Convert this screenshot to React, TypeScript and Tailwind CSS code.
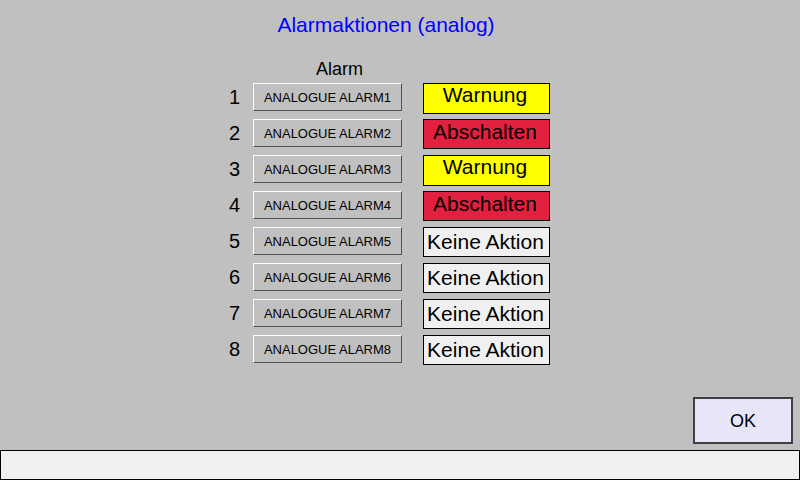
const font = { fontFamily: '"Liberation Sans", Arial, sans-serif' };

type Action = 'warn' | 'off' | 'none';

const rows: { n: number; action: Action }[] = [
  { n: 1, action: 'warn' },
  { n: 2, action: 'off' },
  { n: 3, action: 'warn' },
  { n: 4, action: 'off' },
  { n: 5, action: 'none' },
  { n: 6, action: 'none' },
  { n: 7, action: 'none' },
  { n: 8, action: 'none' },
];

const ActionBox = ({ action }: { action: Action }) => {
  if (action === 'warn')
    return (
      <div className="w-[127px] h-[31px] border border-black bg-[#ffff00] flex justify-center pt-0 pr-[3px] text-[21px] leading-[21px] text-black">
        Warnung
      </div>
    );
  if (action === 'off')
    return (
      <div className="w-[127px] h-[30px] border border-black bg-[#e2203f] flex justify-center pt-px pr-[3px] text-[21px] leading-[21px] text-black">
        Abschalten
      </div>
    );
  return (
    <div className="w-[127px] h-[30px] border border-black bg-[#f0f0f0] flex justify-center pt-[3px] pr-[2px] text-[21px] leading-[21px] text-black whitespace-nowrap">
      Keine Aktion
    </div>
  );
};

export default function App() {
  return (
    <div className="w-[800px] h-[480px] bg-[#c0c0c0] flex flex-col overflow-hidden" style={font}>
      <div className="pt-[14px] pr-[28px] text-center text-[21px] leading-[21px] text-[#0000ff]">
        Alarmaktionen (analog)
      </div>

      <div className="ml-[222px] flex flex-col">
        <div className="mt-[25px] ml-[94px] text-[18px] leading-[18px] text-black">Alarm</div>
        <div className="mt-[5px] flex flex-col gap-[5px]">
          {rows.map((r) => (
            <div key={r.n} className="flex items-start h-[31px]">
              <div className="w-[25px] h-[28px] flex items-center justify-center text-[20px] leading-[20px] text-black">
                {r.n}
              </div>
              <button className="ml-[6px] w-[149px] h-[28px] bg-[#c0c0c0] border border-t-white border-l-white border-b-[#505050] border-r-[#505050] flex items-center justify-center text-[13px] leading-[13px] text-black">
                ANALOGUE ALARM{r.n}
              </button>
              <div className="ml-[21px]">
                <ActionBox action={r.action} />
              </div>
            </div>
          ))}
        </div>
      </div>

      <div className="mt-auto mb-[6px] mr-[7px] self-end">
        <button className="w-[100px] h-[47px] bg-[#e6e6f8] border-2 border-[#404040] flex items-center justify-center text-[18px] leading-[18px] text-black">
          OK
        </button>
      </div>
      <div className="h-[30px] bg-[#f0f0f0] border border-black" />
    </div>
  );
}
